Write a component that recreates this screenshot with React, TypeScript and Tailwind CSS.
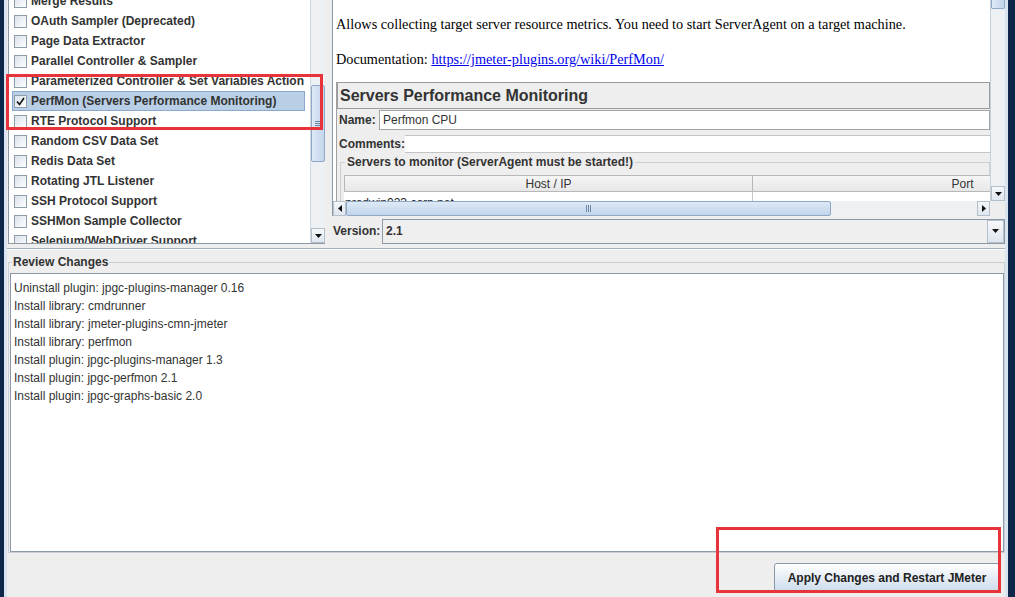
import React from "react";

const plugins = [
  "Merge Results",
  "OAuth Sampler (Deprecated)",
  "Page Data Extractor",
  "Parallel Controller & Sampler",
  "Parameterized Controller & Set Variables Action",
  "PerfMon (Servers Performance Monitoring)",
  "RTE Protocol Support",
  "Random CSV Data Set",
  "Redis Data Set",
  "Rotating JTL Listener",
  "SSH Protocol Support",
  "SSHMon Sample Collector",
  "Selenium/WebDriver Support",
];

const changes = [
  "Uninstall plugin: jpgc-plugins-manager 0.16",
  "Install library: cmdrunner",
  "Install library: jmeter-plugins-cmn-jmeter",
  "Install library: perfmon",
  "Install plugin: jpgc-plugins-manager 1.3",
  "Install plugin: jpgc-perfmon 2.1",
  "Install plugin: jpgc-graphs-basic 2.0",
];

const Arrow = ({ dir }: { dir: "down" | "left" | "right" }) => {
  const pts =
    dir === "down" ? "0,0 7,0 3.5,4" : dir === "left" ? "4,0 4,7 0,3.5" : "0,0 0,7 4,3.5";
  const w = dir === "down" ? 7 : 4;
  const h = dir === "down" ? 4 : 7;
  return (
    <svg width={w} height={h} viewBox={`0 0 ${w} ${h}`}>
      <polygon points={pts} fill="#111" />
    </svg>
  );
};

const ArrowButton = ({ dir, className }: { dir: "down" | "left" | "right"; className: string }) => (
  <div
    className={`flex flex-none items-center justify-center border border-[#b3bfcb] bg-gradient-to-b from-[#f6f8fa] to-[#dfe6ee] ${className}`}
  >
    <Arrow dir={dir} />
  </div>
);

const Grip = ({ vertical }: { vertical: boolean }) =>
  vertical ? (
    <div className="flex flex-col gap-[1px]">
      <div className="h-px w-[7px] bg-[#6f88a6]" />
      <div className="h-px w-[7px] bg-[#6f88a6]" />
      <div className="h-px w-[7px] bg-[#6f88a6]" />
    </div>
  ) : (
    <div className="flex gap-[1px]">
      <div className="h-[7px] w-px bg-[#6f88a6]" />
      <div className="h-[7px] w-px bg-[#6f88a6]" />
      <div className="h-[7px] w-px bg-[#6f88a6]" />
    </div>
  );

const Checkbox = ({ checked }: { checked?: boolean }) => (
  <div className="flex h-[13px] w-[13px] flex-none items-center justify-center border border-[#8f9dab] bg-gradient-to-br from-[#d9e1ea] to-white">
    {checked && (
      <svg width="9" height="9" viewBox="0 0 9 9">
        <path d="M1 4.5 L3.5 7.5 L8 1" stroke="#111" strokeWidth="1.6" fill="none" />
      </svg>
    )}
  </div>
);

const PluginList = () => (
  <div className="ml-[1px] flex h-[244px] w-[317px] flex-none border-b border-l border-[#8d99a5] bg-white">
    <div className="min-w-0 flex-1 overflow-hidden">
      <div className="-mt-[9px]">
        {plugins.map((p) => {
          const sel = p.startsWith("PerfMon");
          return (
            <div
              key={p}
              className={`ml-[3px] mr-[5px] flex h-[20px] items-center gap-[4px] border pl-[1px] ${
                sel ? "border-[#8aa9cc] bg-[#b8cfe6]" : "border-transparent"
              }`}
            >
              <Checkbox checked={sel} />
              <span className="whitespace-nowrap text-[12px] font-bold text-[#333]">{p}</span>
            </div>
          );
        })}
      </div>
    </div>
    <div className="flex w-[15px] flex-none flex-col border-l border-[#d2d9e0] bg-[#eef1f4]">
      <div className="h-[85px]" />
      <div className="flex h-[77px] items-center justify-center rounded-[2px] border border-[#8ea8c6] bg-gradient-to-r from-[#dde9f6] to-[#c2d5ea]">
        <Grip vertical />
      </div>
      <div className="flex-1" />
      <ArrowButton dir="down" className="h-[15px]" />
    </div>
  </div>
);

const DetailPane = () => (
  <div className="flex min-w-0 flex-1 flex-col">
    <div className="flex h-[201px]">
      <div className="min-w-0 flex-1 overflow-hidden border-l border-[#8d99a5] bg-white pl-[3px] pt-[15px]">
        <p className="whitespace-nowrap font-['Liberation_Serif',serif] text-[14.25px] leading-[18px] text-black">
          Allows collecting target server resource metrics. You need to start ServerAgent on a target machine.
        </p>
        <p className="mt-[17px] whitespace-nowrap font-['Liberation_Serif',serif] text-[14.25px] leading-[18px] text-black">
          Documentation:{" "}
          <span className="text-[#0000ee] underline">https://jmeter-plugins.org/wiki/PerfMon/</span>
        </p>
        <div className="mt-[14px] border-l border-[#a0a0a0] bg-[#eeeeee]">
          <div className="flex h-[27px] items-center border border-[#9a9a9a] pl-[2px] text-[16px] font-bold text-[#333]">
            Servers Performance Monitoring
          </div>
          <div className="flex h-[22px] items-center">
            <div className="w-[42px] flex-none pl-[2px] text-[12px] font-bold text-[#333]">Name:</div>
            <div className="flex h-[20px] flex-1 items-center border border-[#a5a5a5] bg-white pl-[3px] text-[12px] text-[#333]">
              Perfmon CPU
            </div>
          </div>
          <div className="mt-[4px] flex h-[18px] items-center">
            <div className="w-[68px] flex-none pl-[2px] text-[12px] font-bold text-[#333]">Comments:</div>
            <div className="h-[18px] flex-1 border-y border-[#c4c4c4] bg-white" />
          </div>
          <fieldset className="ml-[3px] mt-[2px] min-w-0 border border-[#cfcfcf] pb-[10px]">
            <legend className="ml-[4px] px-[2px] text-[12px] font-bold leading-[14px] text-[#333]">
              Servers to monitor (ServerAgent must be started!)
            </legend>
            <div className="ml-[3px] mt-[6px] w-[829px]">
              <div className="flex h-[17px] bg-gradient-to-b from-[#f7f7f7] to-[#e6e6e6] text-[12px] text-[#333]">
                <div className="flex w-[409px] flex-none items-center justify-center border border-[#b8b8b8]">
                  Host / IP
                </div>
                <div className="flex w-[420px] flex-none items-center justify-center border-y border-r border-[#b8b8b8]">
                  Port
                </div>
              </div>
              <div className="flex h-[17px] bg-white text-[12px] text-[#222]">
                <div className="flex w-[409px] flex-none items-center border-r border-[#c8c8c8] pl-[1px] pt-[4px]">
                  prodwin023.corp.net
                </div>
              </div>
            </div>
          </fieldset>
        </div>
      </div>
      <div className="flex w-[15px] flex-none flex-col border-l border-[#c9d1d9] bg-[#eef1f4]">
        <div className="h-[9px] rounded-b-[2px] border-x border-b border-[#8ea8c6] bg-gradient-to-r from-[#dde9f6] to-[#c2d5ea]" />
        <div className="flex-1" />
        <ArrowButton dir="down" className="h-[15px]" />
      </div>
    </div>
    <div className="flex h-[15px]">
      <div className="flex min-w-0 flex-1 border-l border-[#8d99a5] bg-[#eef1f4]">
        <ArrowButton dir="left" className="w-[13px]" />
        <div className="flex w-[485px] flex-none items-center justify-center rounded-[2px] border border-[#8ea8c6] bg-gradient-to-b from-[#dde9f6] to-[#c2d5ea]">
          <Grip vertical={false} />
        </div>
        <div className="flex-1" />
        <ArrowButton dir="right" className="w-[13px]" />
      </div>
      <div className="w-[15px] flex-none bg-[#eeeeee]" />
    </div>
    <div className="flex h-[30px] items-center">
      <div className="w-[50px] flex-none pl-[1px] text-[12px] font-bold text-[#333]">Version:</div>
      <div className="flex h-[25px] flex-1 border border-[#8d99a5] bg-[#efefef]">
        <div className="flex flex-1 items-center pl-[3px] text-[12px] font-bold text-[#333]">2.1</div>
        <ArrowButton dir="down" className="w-[17px]" />
      </div>
    </div>
  </div>
);

export default function App() {
  return (
    <div className="relative flex h-[597px] w-[1015px] overflow-hidden bg-[#eeeeee] font-['Liberation_Sans',Arial,sans-serif] text-[12px] text-[#333]">
      <div className="w-[4px] flex-none bg-[#0c2749]" />
      <div className="w-[3px] flex-none bg-[#d9e4ef]" />
      <div className="flex w-[998px] flex-none flex-col">
        <div className="flex h-[246px]">
          <PluginList />
          <div className="w-[7px] flex-none" />
          <DetailPane />
        </div>
        <div className="h-[6px] pt-[2px]">
          <div className="h-px bg-[#a7b1bb]" />
          <div className="h-px bg-white" />
        </div>
        <fieldset className="ml-[1px] mt-[3px] min-w-0 border border-[#c9d0d7]">
          <legend className="ml-[3px] px-[1px] text-[12px] font-bold leading-[14px] text-[#333]">Review Changes</legend>
          <div className="ml-[1px] mt-[4px] h-[279px] border border-[#8d99a5] bg-white pl-[3px] pt-[5px]">
            {changes.map((c) => (
              <div key={c} className="text-[12px] leading-[18px] text-[#333]">
                {c}
              </div>
            ))}
          </div>
        </fieldset>
        <div className="flex h-[44px] items-start justify-end pr-[5px] pt-[10px]">
          <button className="h-[29px] w-[226px] rounded-[3px] border border-[#8a99a8] bg-gradient-to-b from-white to-[#cddcec] text-[12px] font-bold text-[#222]">
            Apply Changes and Restart JMeter
          </button>
        </div>
      </div>
      <div className="w-[3px] flex-none bg-[#d9e4ef]" />
      <div className="flex-1 bg-[#0c2749]" />

      <div className="pointer-events-none absolute left-[6px] top-[74px] h-[56px] w-[317px] border-[3px] border-[#e8333a]" />
      <div className="pointer-events-none absolute left-[716px] top-[527px] h-[66px] w-[285px] border-[3px] border-[#e8333a]" />
    </div>
  );
}
